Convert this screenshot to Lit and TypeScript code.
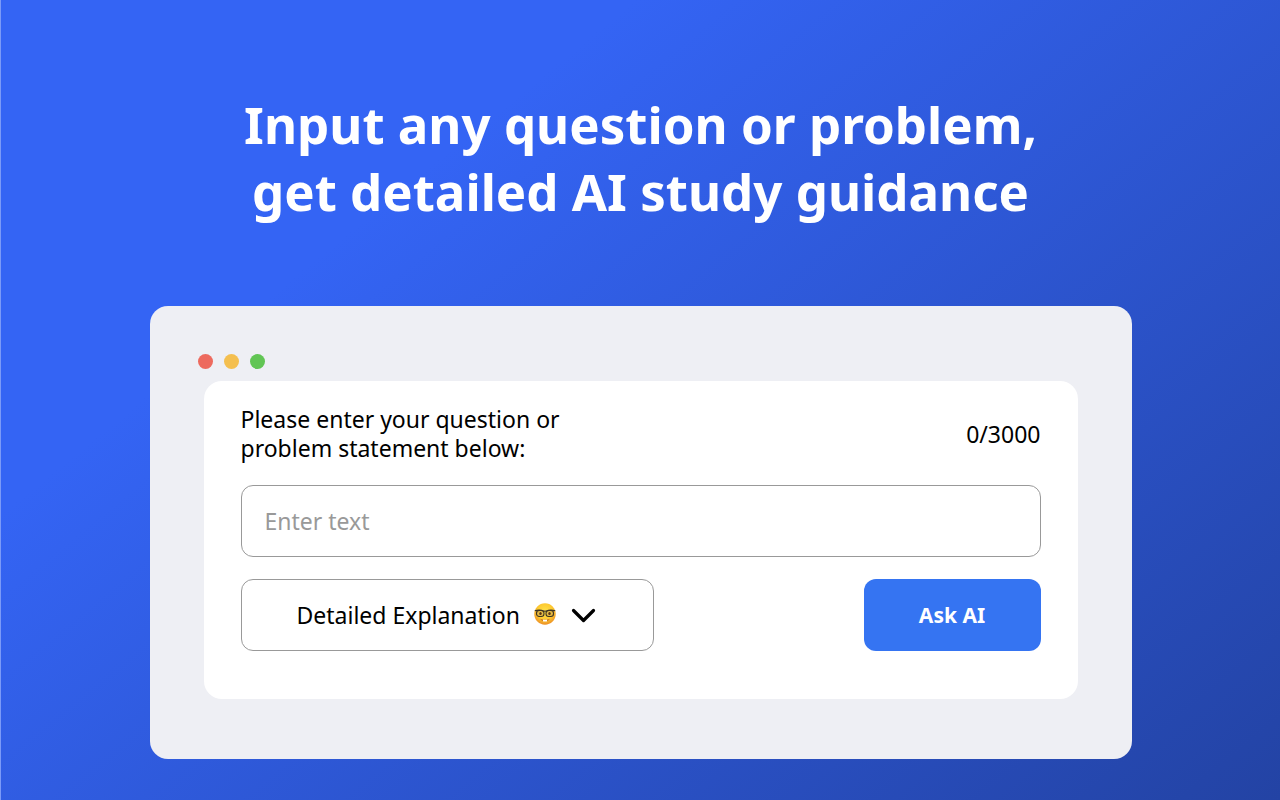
import { LitElement, html, css, svg } from "lit";
import { customElement, state } from "lit/decorators.js";

const nerdFace = svg`
  <svg class="emoji" viewBox="0 0 44 44" aria-hidden="true">
    <defs>
      <radialGradient id="skin" cx="50%" cy="38%" r="62%">
        <stop offset="0" stop-color="#ffe34a" />
        <stop offset="0.6" stop-color="#fdc930" />
        <stop offset="1" stop-color="#ec8f25" />
      </radialGradient>
    </defs>
    <circle cx="22" cy="22" r="21.500" fill="url(#skin)" />
    <g fill="#d9b04a" fill-opacity="0.700" stroke="#3d3424" stroke-width="2.200">
      <rect x="5" y="15" width="15" height="12" rx="5.500" />
      <rect x="24" y="15" width="15" height="12" rx="5.500" />
    </g>
    <path d="M1.500 15.500Q12 12.500 20 16.500q2-1.200 4 0q8-4 18.500-1" fill="none" stroke="#3d3424" stroke-width="2.200" />
    <ellipse cx="13" cy="21" rx="2.400" ry="3.200" fill="#5c3712" />
    <ellipse cx="31" cy="21" rx="2.400" ry="3.200" fill="#5c3712" />
    <path d="M12 31.500q10 4 20 0q-3 5-10 5t-10-5z" fill="#c8741f" />
    <path d="M18 33q4 .8 8 0v3q-1 1.300-2 1.300T22 36.500q-1 .8-2 .8T18 36z" fill="#fff" />
  </svg>
`;

@customElement("app-root")
export class AppRoot extends LitElement {
  static styles = css`
    :host {
      display: block;
      font-family: "Noto Sans", "Open Sans", sans-serif;
      font-size: 23px;
      line-height: 29px;
      color: #000;
    }
    .page {
      box-sizing: border-box;
      min-height: 100vh;
      padding: 91px 24px 40px;
      border-left: 1px solid #7b9af8;
      background: linear-gradient(141deg, #3464f4 0%, #3464f4 28%, #2343a4 100%);
      display: flex;
      flex-direction: column;
      align-items: center;
      gap: 81px;
    }
    .title {
      margin: 0;
      color: #fff;
      font-size: 51px;
      line-height: 67px;
      font-weight: 700;
      text-align: center;
    }
    .line {
      display: block;
    }
    .window {
      box-sizing: border-box;
      width: 100%;
      max-width: 982px;
      padding: 48px 54px 60px;
      border-radius: 18px;
      background: #eeeff4;
    }
    .lights {
      display: flex;
      gap: 11px;
      margin: 0 0 12px -6px;
    }
    .light {
      width: 15px;
      height: 15px;
      border-radius: 50%;
    }
    .red {
      background: #ed6a5e;
    }
    .amber {
      background: #f4bf4f;
    }
    .green {
      background: #61c554;
    }
    .card {
      padding: 24px 37px 48px;
      border-radius: 18px;
      background: #fff;
      display: grid;
      gap: 22px;
    }
    .prompt {
      display: flex;
      align-items: center;
      justify-content: space-between;
      gap: 24px;
    }
    .field,
    .select,
    .ask {
      box-sizing: border-box;
      height: 72px;
      border: 1px solid #999;
      border-radius: 12px;
      font: inherit;
      color: inherit;
      background: #fff;
    }
    .field {
      width: 100%;
      padding: 0 23px;
    }
    .field::placeholder {
      color: #999;
      opacity: 1;
    }
    .actions {
      display: flex;
      align-items: center;
      justify-content: space-between;
      gap: 24px;
    }
    .picker {
      position: relative;
      flex: 0 1 413px;
    }
    .select {
      width: 100%;
      padding: 0 120px 0 55px;
      appearance: none;
      cursor: pointer;
    }
    .marks {
      position: absolute;
      inset: 0 58px 0 auto;
      display: flex;
      align-items: center;
      gap: 15px;
      pointer-events: none;
    }
    .emoji {
      width: 22px;
      height: 22px;
      margin-bottom: 2px;
    }
    .chevron {
      width: 25px;
      height: 16px;
    }
    .ask {
      flex: 0 0 177px;
      border: none;
      background: #3574f2;
      color: #fff;
      font-size: 21px;
      font-weight: 700;
      cursor: pointer;
    }
  `;

  @state() private text = "";

  private onInput(event: Event) {
    this.text = (event.target as HTMLInputElement).value;
  }

  render() {
    return html`
      <main class="page">
        <h1 class="title">
          <span class="line">Input any question or problem,</span>
          <span class="line">get detailed AI study guidance</span>
        </h1>
        <section class="window">
          <div class="lights">
            <span class="light red"></span>
            <span class="light amber"></span>
            <span class="light green"></span>
          </div>
          <div class="card">
            <div class="prompt">
              <label for="question">
                <span class="line">Please enter your question or</span>
                <span class="line">problem statement below:</span>
              </label>
              <span>${this.text.length}/3000</span>
            </div>
            <input
              id="question"
              class="field"
              type="text"
              maxlength="3000"
              placeholder="Enter text"
              .value=${this.text}
              @input=${this.onInput}
            />
            <div class="actions">
              <div class="picker">
                <select class="select" aria-label="Answer style">
                  <option>Detailed Explanation</option>
                </select>
                <div class="marks">
                  ${nerdFace}
                  <svg class="chevron" viewBox="0 0 25 16" aria-hidden="true">
                    <path d="M2.500 3.500L12.500 13.500L22.500 3.500" fill="none" stroke="#000" stroke-width="3.200" stroke-linecap="round" stroke-linejoin="round" />
                  </svg>
                </div>
              </div>
              <button class="ask" type="button">Ask AI</button>
            </div>
          </div>
        </section>
      </main>
    `;
  }
}
